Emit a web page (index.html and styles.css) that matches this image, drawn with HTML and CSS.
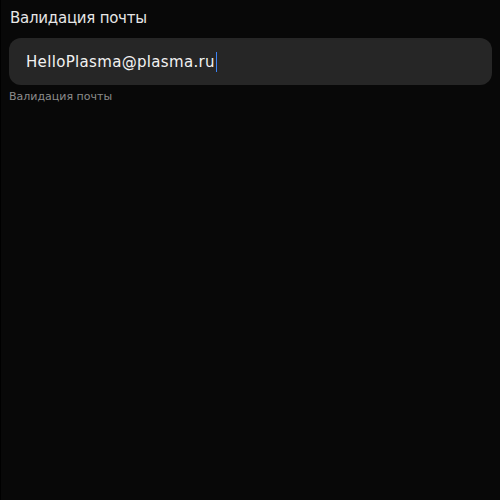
FILE: index.html
```html
<!DOCTYPE html>
<html lang="ru">
<head>
<meta charset="utf-8">
<link rel="stylesheet" href="styles.css">
</head>
<body>
<div class="page">
  <div class="field">
    <label class="label">Валидация почты</label>
    <div class="input">
      <span class="value">HelloPlasma@plasma.ru</span><span class="caret"></span>
    </div>
    <div class="helper">Валидация почты</div>
  </div>
</div>
</body>
</html>
```
FILE: styles.css
```css
html, body {
  margin: 0;
  padding: 0;
  background: #080808;
  height: 100%;
}
.page {
  height: 100%;
  box-sizing: border-box;
  border-left: 1px solid #000;
  padding: 8px 8px 0 8px;
  font-family: "DejaVu Sans", sans-serif;
}
.field {
  display: flex;
  flex-direction: column;
}
.label {
  color: #e6e6e6;
  font-size: 15px;
  line-height: 20px;
  padding-left: 1px;
  letter-spacing: -0.25px;
}
.input {
  margin-top: 10px;
  height: 47px;
  background: #262626;
  border-radius: 12px;
  display: flex;
  align-items: center;
  padding-left: 17px;
}
.value {
  color: #f2f2f2;
  font-size: 15px;
  letter-spacing: 0.33px;
}
.caret {
  width: 1px;
  height: 20px;
  background: #3b82f6;
  margin-left: 1px;
}
.helper {
  margin-top: 5px;
  padding-left: 0;
  color: #8c8c8c;
  font-size: 11px;
  line-height: 14px;
  letter-spacing: 0;
}
```
